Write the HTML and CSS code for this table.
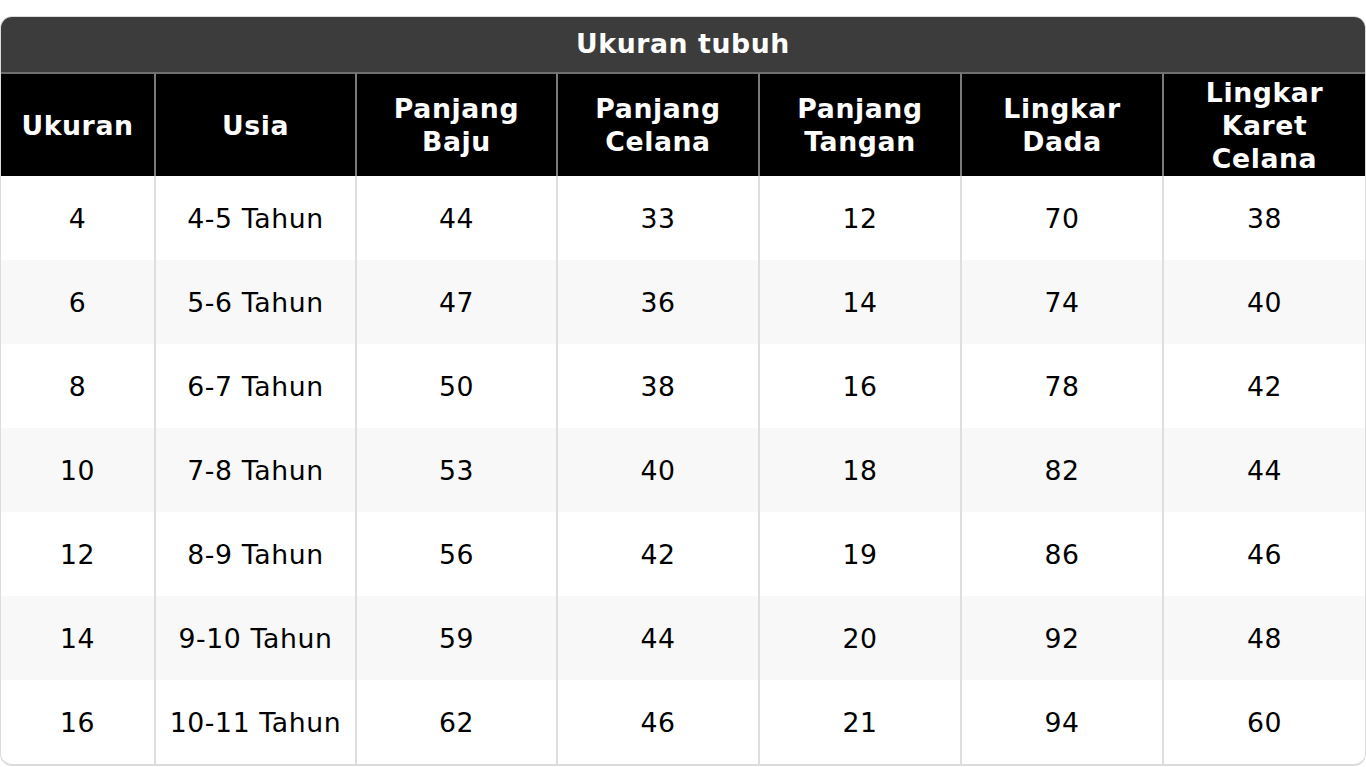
FILE: index.html
```html
<!DOCTYPE html>
<html>
<head>
<meta charset="utf-8">
<link rel="stylesheet" href="styles.css">
</head>
<body>
<div class="card">
  <table class="size-table">
    <colgroup>
      <col class="c1"><col class="c2"><col class="c3"><col class="c4"><col class="c5"><col class="c6"><col class="c7">
    </colgroup>
    <thead>
      <tr class="title-row"><th colspan="7">Ukuran tubuh</th></tr>
      <tr class="head-row">
        <th>Ukuran</th>
        <th>Usia</th>
        <th>Panjang<br>Baju</th>
        <th>Panjang<br>Celana</th>
        <th>Panjang<br>Tangan</th>
        <th>Lingkar<br>Dada</th>
        <th>Lingkar<br>Karet<br>Celana</th>
      </tr>
    </thead>
    <tbody>
      <tr><td>4</td><td>4-5 Tahun</td><td>44</td><td>33</td><td>12</td><td>70</td><td>38</td></tr>
      <tr><td>6</td><td>5-6 Tahun</td><td>47</td><td>36</td><td>14</td><td>74</td><td>40</td></tr>
      <tr><td>8</td><td>6-7 Tahun</td><td>50</td><td>38</td><td>16</td><td>78</td><td>42</td></tr>
      <tr><td>10</td><td>7-8 Tahun</td><td>53</td><td>40</td><td>18</td><td>82</td><td>44</td></tr>
      <tr><td>12</td><td>8-9 Tahun</td><td>56</td><td>42</td><td>19</td><td>86</td><td>46</td></tr>
      <tr><td>14</td><td>9-10 Tahun</td><td>59</td><td>44</td><td>20</td><td>92</td><td>48</td></tr>
      <tr><td>16</td><td>10-11 Tahun</td><td>62</td><td>46</td><td>21</td><td>94</td><td>60</td></tr>
    </tbody>
  </table>
</div>
</body>
</html>
```
FILE: styles.css
```css
html, body {
  margin: 0;
  padding: 0;
  background: #fff;
}
body {
  font-family: "DejaVu Sans", sans-serif;
  font-size: 26.7px;
  letter-spacing: 0.6px;
  color: #000;
}
.card {
  margin-top: 16px;
  width: 1366px;
  box-sizing: border-box;
  border: 1px solid #dcdcdc;
  border-bottom-width: 2px;
  border-radius: 12px;
  overflow: hidden;
}
.size-table {
  width: 100%;
  table-layout: fixed;
  border-collapse: separate;
  border-spacing: 0;
}
.c1 { width: 153px; }
.c2 { width: 201px; }
.c3 { width: 201px; }
.c4 { width: 202px; }
.c5 { width: 202px; }
.c6 { width: 202px; }
.c7 { width: 203px; }
.size-table th,
.size-table td {
  padding: 0;
  text-align: center;
  vertical-align: middle;
}
.title-row th {
  background: #3c3c3c;
  color: #fff;
  height: 55px;
  font-weight: bold;
  line-height: 1;
}
.head-row th {
  background: #000;
  color: #fff;
  font-weight: bold;
  line-height: 33px;
  height: 102px;
  border-top: 2px solid #6e6e6e;
}
.head-row th + th {
  border-left: 2px solid #7a7a7a;
}
.size-table td {
  height: 82px;
  padding-top: 2px;
  line-height: 1;
}
.size-table td + td {
  border-left: 2px solid #dedede;
}
.size-table tbody tr:nth-child(even) td {
  background: #f8f8f8;
}
```
